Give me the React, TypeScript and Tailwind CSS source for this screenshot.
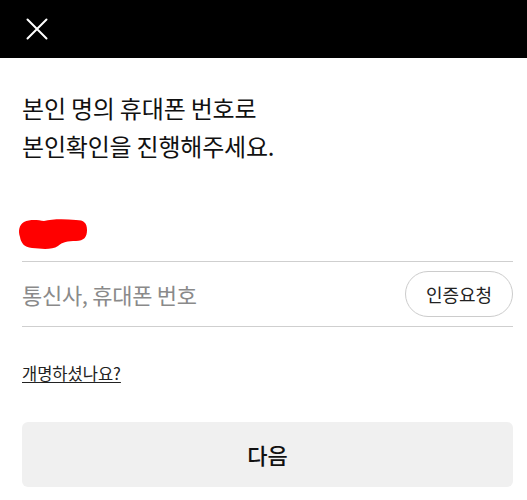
import React from "react";

const font = { fontFamily: '"Noto Sans CJK KR", "Noto Sans", sans-serif' };

function CloseIcon() {
  return (
    <svg width="22" height="22" viewBox="0 0 22 22" fill="none">
      <path d="M1.5 1.5 L20.5 20.5 M20.5 1.5 L1.5 20.5" stroke="white" strokeWidth="2" strokeLinecap="round" />
    </svg>
  );
}

function Redaction() {
  return (
    <svg width="70" height="31" viewBox="0 0 70 31">
      <path
        d="M6 3 C12 0 20 1 26 2 C34 0 46 0 58 1 C66 1 69 4 69 11 C69 18 66 22 58 22 C50 22 44 23 40 27 C34 31 24 30 14 29 C6 28 3 24 2 18 C0 12 1 6 6 3 Z"
        fill="#ff0000"
      />
    </svg>
  );
}

export default function App() {
  return (
    <div className="min-h-[500px] w-full bg-white text-[#111]" style={font}>
      <header className="flex h-[58px] items-center bg-black pl-[26px]">
        <CloseIcon />
      </header>

      <main className="pl-[22px] pr-[14px]">
        <h1 className="mt-[31px] text-[24px] font-normal leading-[38px] tracking-[-0.2px] text-[#111]">
          본인 명의 휴대폰 번호로
          <br />
          본인확인을 진행해주세요.
        </h1>

        <div className="mt-[54px] -ml-[4px] flex h-[31px] items-end">
          <Redaction />
        </div>

        <div className="mt-[11px] flex h-[66px] items-center justify-between border-y border-[#cfcfcf]">
          <span className="text-[22px] tracking-[-0.3px] text-[#8a8a8a]">통신사, 휴대폰 번호</span>
          <button className="flex h-[46px] w-[108px] items-center justify-center rounded-full border border-[#cccccc] bg-white text-[18px] text-[#222]">
            인증요청
          </button>
        </div>

        <div className="mt-[34px] h-[22px]">
          <a href="#" className="text-[16.5px] leading-[22px] text-[#222] underline underline-offset-2">
            개명하셨나요?
          </a>
        </div>

        <button className="mt-[39px] flex h-[65px] w-full items-center justify-center rounded-[6px] bg-[#f0f0f0] text-[22px] font-medium text-[#111]">
          다음
        </button>
      </main>
    </div>
  );
}
